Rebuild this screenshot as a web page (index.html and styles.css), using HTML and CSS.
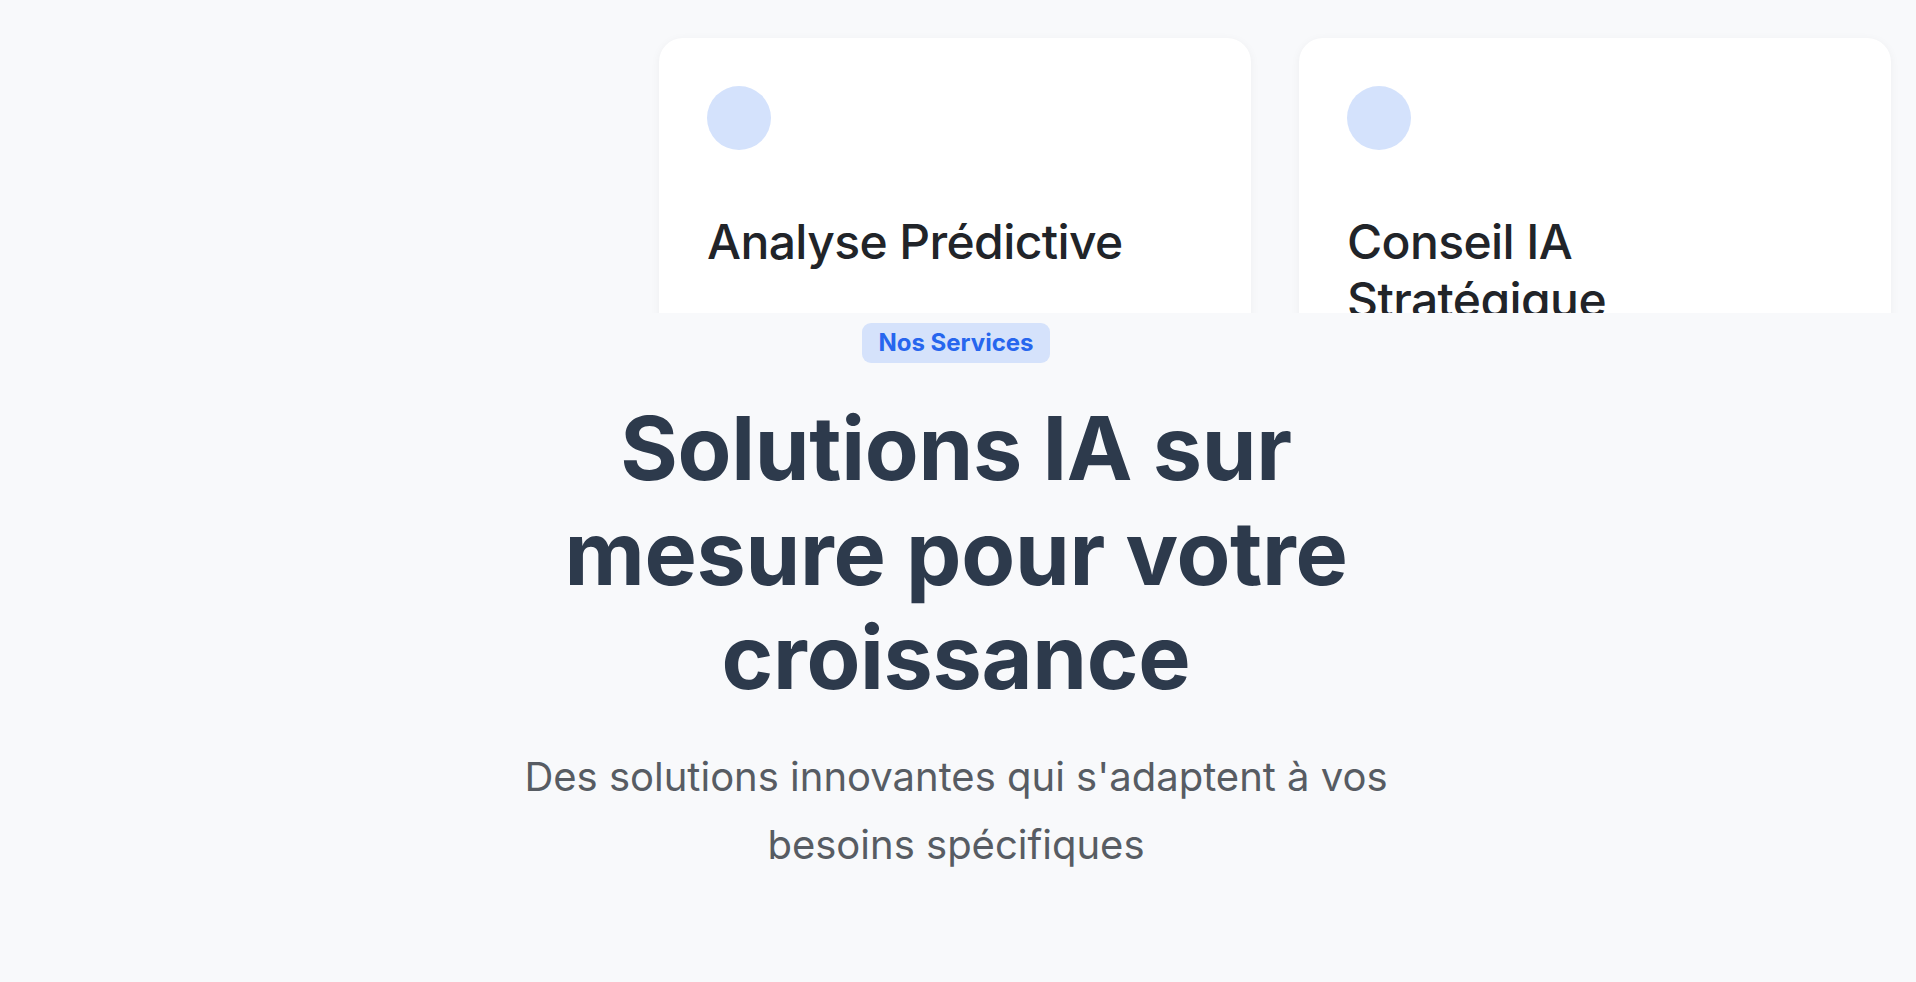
FILE: index.html
```html
<!DOCTYPE html>
<html lang="fr">
<head>
<meta charset="utf-8">
<title>Nos Services</title>
<link rel="stylesheet" href="styles.css">
</head>
<body>
  <div class="cards-viewport">
    <div class="cards-row">
      <article class="card">
        <div class="card-icon"></div>
        <h3 class="card-title">Analyse Prédictive</h3>
      </article>
      <article class="card">
        <div class="card-icon"></div>
        <h3 class="card-title">Conseil IA Stratégique</h3>
      </article>
    </div>
  </div>
  <section class="intro">
    <span class="badge">Nos Services</span>
    <h2 class="intro-title">Solutions IA sur mesure pour votre croissance</h2>
    <p class="intro-text">Des solutions innovantes qui s'adaptent à vos besoins spécifiques</p>
  </section>
</body>
</html>
```

FILE: styles.css
```css
* { box-sizing: border-box; }

html, body {
  margin: 0;
  padding: 0;
  background: #f8f9fb;
  font-family: Inter, "Noto Sans", "Liberation Sans", sans-serif;
  overflow: hidden;
}

.cards-viewport {
  height: 313px;
  overflow: hidden;
}

.cards-row {
  display: flex;
  justify-content: flex-end;
  gap: 48px;
  padding: 38px 25px 0 0;
}

.card {
  width: 592px;
  min-height: 420px;
  background: #ffffff;
  border-radius: 24px;
  padding: 48px;
  box-shadow: 0 2px 10px rgba(15, 23, 42, 0.05);
}

.card-icon {
  width: 64px;
  height: 64px;
  border-radius: 50%;
  background: #d4e2fc;
  margin-bottom: 63px;
}

.card-title {
  margin: 0;
  font-size: 48px;
  line-height: 57.5px;
  font-weight: 500;
  letter-spacing: -0.6px;
  color: #212429;
}

.intro {
  display: flex;
  flex-direction: column;
  align-items: center;
  text-align: center;
  padding: 10px 0 0;
  margin-right: 4px;
}

.badge {
  display: inline-block;
  background: #d5e2fb;
  color: #2766ee;
  font-size: 24px;
  font-weight: 700;
  line-height: 28px;
  padding: 6px 16px;
  border-radius: 9px;
}

.intro-title {
  max-width: 900px;
  margin: 33px 0 0;
  font-size: 88px;
  line-height: 104.5px;
  font-weight: 700;
  letter-spacing: -0.3px;
  color: #2d3a4c;
}

.intro-text {
  max-width: 900px;
  margin: 33px 0 0;
  font-size: 40px;
  line-height: 68px;
  font-weight: 400;
  color: #575c63;
}
```
